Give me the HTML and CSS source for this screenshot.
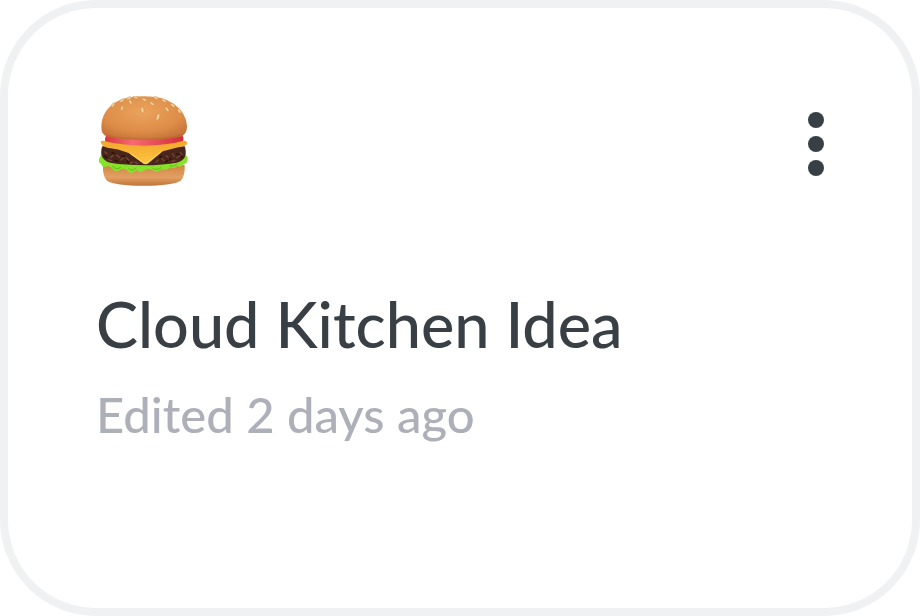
FILE: index.html
```
<!DOCTYPE html>
<html lang="en">
<head>
  <meta charset="UTF-8">
  <meta name="viewport" content="width=device-width, initial-scale=1">
  <title>Cloud Kitchen Idea</title>
  <link rel="stylesheet" href="styles.css">
</head>
<body>
  <article class="card">
    <div class="card-header">
      <svg class="card-icon" viewBox="18 30 288 288" aria-hidden="true">
        <defs>
          <radialGradient id="bun" cx="0.48" cy="0.35" r="0.75">
            <stop offset="0" stop-color="#eba35c"/>
            <stop offset="0.6" stop-color="#de8d49"/>
            <stop offset="1" stop-color="#bd6c32"/>
          </radialGradient>
          <linearGradient id="bottom" x1="0" y1="0" x2="0" y2="1">
            <stop offset="0" stop-color="#d08542"/>
            <stop offset="0.6" stop-color="#e3a064"/>
            <stop offset="1" stop-color="#c27439"/>
          </linearGradient>
          <linearGradient id="tomato" x1="0" y1="0" x2="1" y2="0">
            <stop offset="0" stop-color="#d9363f"/>
            <stop offset="0.35" stop-color="#f76a70"/>
            <stop offset="1" stop-color="#d22d39"/>
          </linearGradient>
          <linearGradient id="cheese" x1="0" y1="0" x2="0" y2="1">
            <stop offset="0" stop-color="#f2a62d"/>
            <stop offset="1" stop-color="#ffc63f"/>
          </linearGradient>
        </defs>
        <!-- bottom bun -->
        <path fill="url(#bottom)" d="M39 236 L284 236 Q286 270 272 284 Q246 299 161 299 Q76 299 51 284 Q37 270 39 236Z"/>
        <!-- lettuce -->
        <path fill="#86e22a" d="M36 206 Q24 216 28 230 Q35 232 37 241 Q45 246 52 240 Q62 240 68 249 Q78 263 91 250 Q105 244 116 258 Q128 267 139 251 Q150 264 164 253 Q176 246 188 252 Q203 264 215 249 Q230 256 240 244 Q252 251 262 239 Q274 246 281 234 Q293 233 293 218 Q293 208 284 208Z"/>
        <path fill="none" stroke="#5fbd17" stroke-width="3" stroke-linecap="round" d="M68 241Q80 254 92 244M117 248Q128 258 138 246M188 247Q202 255 213 245M240 240Q252 245 261 234"/>
        <!-- patty -->
        <path fill="#48261b" d="M37 181 Q33 188 34 206 Q40 226 64 231 Q105 237 161 238 Q222 237 260 230 Q283 224 287 206 Q288 189 284 181Z"/>
        <path fill="none" stroke="#7b4630" stroke-width="4" stroke-linecap="round" d="M44 198l7 5M62 214l8-5M55 221l10 3M80 207l8 7M92 222l9-6M109 214l7 8M120 231l9-3M136 229l6 4M197 228l8-6M216 218l7 7M229 209l8 7M247 203l6 8M260 216l9-6M271 200l6 5M246 226l9-3"/>
        <path fill="none" stroke="#241310" stroke-width="4" stroke-linecap="round" d="M43 210l8 5M66 200l7 3M75 223l8 3M96 209l8 2M111 225l5 6M208 214l6-3M225 227l8-3M238 216l5 4M260 203l7 2M273 215l5-3"/>
        <!-- tomato and cheese -->
        <path fill="url(#tomato)" d="M49 148 Q161 154 276 147 Q284 157 278 169 Q264 178 161 181 Q60 179 47 170 Q42 160 49 148Z"/>
        <path fill="url(#cheese)" d="M32 168 Q33 163 43 165 Q94 178 161 179 Q232 178 281 164 Q292 163 291 174 Q287 181 265 184 L218 196 L176 231 Q166 239 157 230 L116 201 Q84 188 52 185 Q35 181 32 168Z"/>
        <path fill="none" stroke="#ffda66" stroke-width="3" d="M119 201 L158 229 Q166 235 174 228 L215 196"/>
        <!-- top bun -->
        <path fill="url(#bun)" d="M34 123 Q34 75 79 47 Q109 31 162 31 Q219 31 251 53 Q288 80 291 119 Q292 147 268 153 Q218 162 160 162 Q91 162 51 151 Q34 147 34 123Z"/>
        <path fill="none" stroke="#af622b" stroke-width="4" opacity="0.4" d="M45 146 Q93 159 161 159 Q229 159 279 146"/>
        <!-- sesame seeds -->
        <g fill="#f3cf94" stroke="#b8712f" stroke-width="1">
          <ellipse cx="69" cy="57" rx="4" ry="8" transform="rotate(38 69 57)"/>
          <ellipse cx="96" cy="67" rx="4" ry="8" transform="rotate(20 96 67)"/>
          <ellipse cx="96" cy="44" rx="4" ry="8" transform="rotate(60 96 44)"/>
          <ellipse cx="117" cy="37" rx="4" ry="8" transform="rotate(70 117 37)"/>
          <ellipse cx="121" cy="48" rx="4" ry="8" transform="rotate(-35 121 48)"/>
          <ellipse cx="137" cy="34" rx="4" ry="7" transform="rotate(-70 137 34)"/>
          <ellipse cx="163" cy="41" rx="4" ry="8" transform="rotate(-72 163 41)"/>
          <ellipse cx="157" cy="72" rx="5" ry="9" transform="rotate(-8 157 72)"/>
          <ellipse cx="186" cy="53" rx="4" ry="8" transform="rotate(-50 186 53)"/>
          <ellipse cx="198" cy="36" rx="4" ry="7" transform="rotate(-75 198 36)"/>
          <ellipse cx="204" cy="93" rx="5" ry="10" transform="rotate(12 204 93)"/>
          <ellipse cx="222" cy="44" rx="4" ry="8" transform="rotate(-60 222 44)"/>
          <ellipse cx="231" cy="70" rx="4" ry="8" transform="rotate(-40 231 70)"/>
          <ellipse cx="248" cy="58" rx="4" ry="8" transform="rotate(-50 248 58)"/>
          <ellipse cx="268" cy="75" rx="4" ry="8" transform="rotate(-32 268 75)"/>
        </g>
      </svg>

      <button class="menu-button" type="button" aria-label="More options">
        <span class="dot"></span>
        <span class="dot"></span>
        <span class="dot"></span>
      </button>
    </div>

    <h1 class="card-title">Cloud Kitchen Idea</h1>
    <p class="card-meta">Edited 2 days ago</p>
  </article>
</body>
</html>
```

FILE: styles.css
```
* {
  box-sizing: border-box;
}

body {
  margin: 0;
  min-height: 100vh;
  display: flex;
  background: white;
  font-family: Lato, sans-serif;
  font-weight: 500;
}

.card {
  flex: 1;
  padding: 88px;
  background: white;
  border: 8px solid #f0f1f3;
  border-radius: 96px;
}

.card-header {
  display: flex;
  justify-content: space-between;
  align-items: center;
  margin-bottom: 92px;
}

.card-icon {
  width: 96px;
  height: 96px;
}

.menu-button {
  display: flex;
  flex-direction: column;
  gap: 8px;
  padding: 0;
  border: none;
  background: none;
  cursor: pointer;
}

.dot {
  width: 16px;
  height: 16px;
  border-radius: 50%;
  background: #394045;
}

.card-title {
  margin: 0 0 22px;
  font-size: 63px;
  font-weight: 500;
  line-height: 80px;
  color: #394045;
}

.card-meta {
  margin: 0;
  font-size: 49px;
  line-height: 56px;
  color: #adb0b8;
}
```
